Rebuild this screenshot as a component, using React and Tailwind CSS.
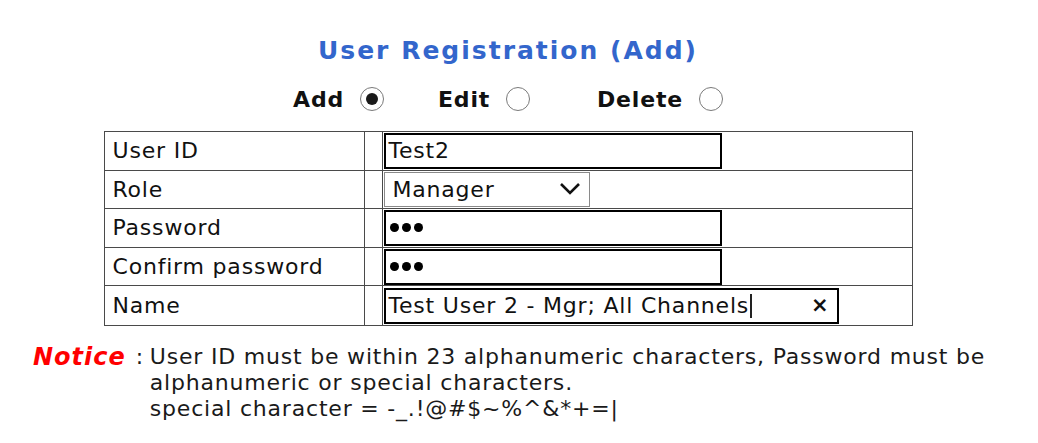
import { useState } from 'react';

const font = { fontFamily: '"DejaVu Sans", Verdana, sans-serif' };

function Radio({ checked, onClick }) {
  return (
    <span
      onClick={onClick}
      className="inline-flex items-center justify-center w-[24px] h-[24px] rounded-full border-[1.5px] border-[#7a7a7a] bg-white cursor-pointer"
    >
      {checked && <span className="w-[12px] h-[12px] rounded-full bg-[#1a1a1a]" />}
    </span>
  );
}

function Dots() {
  return (
    <span className="flex items-center gap-[3px] pl-[4px]">
      <span className="w-[9px] h-[9px] rounded-full bg-black" />
      <span className="w-[9px] h-[9px] rounded-full bg-black" />
      <span className="w-[9px] h-[9px] rounded-full bg-black" />
    </span>
  );
}

function Row({ label, children, last }) {
  return (
    <div className={`flex h-[38.6px] ${last ? '' : 'border-b-[1.5px] border-[#4a4a4a]'}`}>
      <div className="w-[260px] flex items-center pl-[8px] border-r-[1.5px] border-[#4a4a4a] text-[22px] tracking-[0.8px] text-[#111]">
        {label}
      </div>
      <div className="w-[18px] border-r-[1.5px] border-[#4a4a4a]" />
      <div className="flex-1 flex items-center pl-[1px]">{children}</div>
    </div>
  );
}

export default function App() {
  const [mode, setMode] = useState('add');
  const modes = [
    { key: 'add', label: 'Add', gap: '' },
    { key: 'edit', label: 'Edit', gap: 'ml-[54px]' },
    { key: 'delete', label: 'Delete', gap: 'ml-[67px]' },
  ];

  const box = 'h-[36px] border-[2.5px] border-black bg-white flex items-center text-[22px] tracking-[0.8px] text-[#111]';

  return (
    <div className="w-[1038px] h-[443px] bg-white overflow-hidden" style={font}>
      <div className="w-[1016px] flex flex-col items-center">
        <h1 className="pt-[38px] text-[25px] leading-none font-bold tracking-[2px] text-[#3366cc]">
          User Registration (Add)
        </h1>
        <div className="mt-[24px] flex items-center h-[24px] text-[22px] font-bold tracking-[0.8px] text-[#111]">
          {modes.map((m) => (
            <div key={m.key} className={`flex items-center gap-[16px] ${m.gap}`}>
              <span>{m.label}</span>
              <Radio checked={mode === m.key} onClick={() => setMode(m.key)} />
            </div>
          ))}
        </div>

        <div className="mt-[20px] w-[809px] border-[1.5px] border-[#4a4a4a]">
          <Row label="User ID">
            <div className={`${box} w-[338px] pl-[3px]`}>Test2</div>
          </Row>
          <Row label="Role">
            <div className="h-[35px] w-[206px] border border-[#8a8a8a] bg-white flex items-center justify-between pl-[8px] pr-[8px] text-[22px] tracking-[0.8px] text-[#111]">
              <span>Manager</span>
              <svg width="22" height="14" viewBox="0 0 22 14" fill="none">
                <path d="M2 2 L11 11 L20 2" stroke="#111" strokeWidth="2.6" />
              </svg>
            </div>
          </Row>
          <Row label="Password">
            <div className={`${box} w-[338px]`}><Dots /></div>
          </Row>
          <Row label="Confirm password">
            <div className={`${box} w-[338px]`}><Dots /></div>
          </Row>
          <Row label="Name" last>
            <div className={`${box} w-[455px] pl-[3px] pr-[7px] justify-between`}>
              <span className="flex items-center">
                Test User 2 - Mgr; All Channels
                <span className="ml-[1px] w-[2px] h-[24px] bg-[#222]" />
              </span>
              <span className="text-[21px] font-bold">×</span>
            </div>
          </Row>
        </div>
      </div>

      <div className="mt-[18px] ml-[33px] flex items-start text-[22px] leading-[26px] tracking-[0.8px] text-[#1a1a1a]">
        <span className="font-bold italic text-[24px] tracking-[1px] text-[#ff0000]">Notice</span>
        <span className="ml-[10px] w-[14px]">:</span>
        <div className="w-[870px]">
          <p>User ID must be within 23 alphanumeric characters, Password must be alphanumeric or special characters.</p>
          <p>special character = -_.!@#$~%^&amp;*+=|</p>
        </div>
      </div>
    </div>
  );
}
